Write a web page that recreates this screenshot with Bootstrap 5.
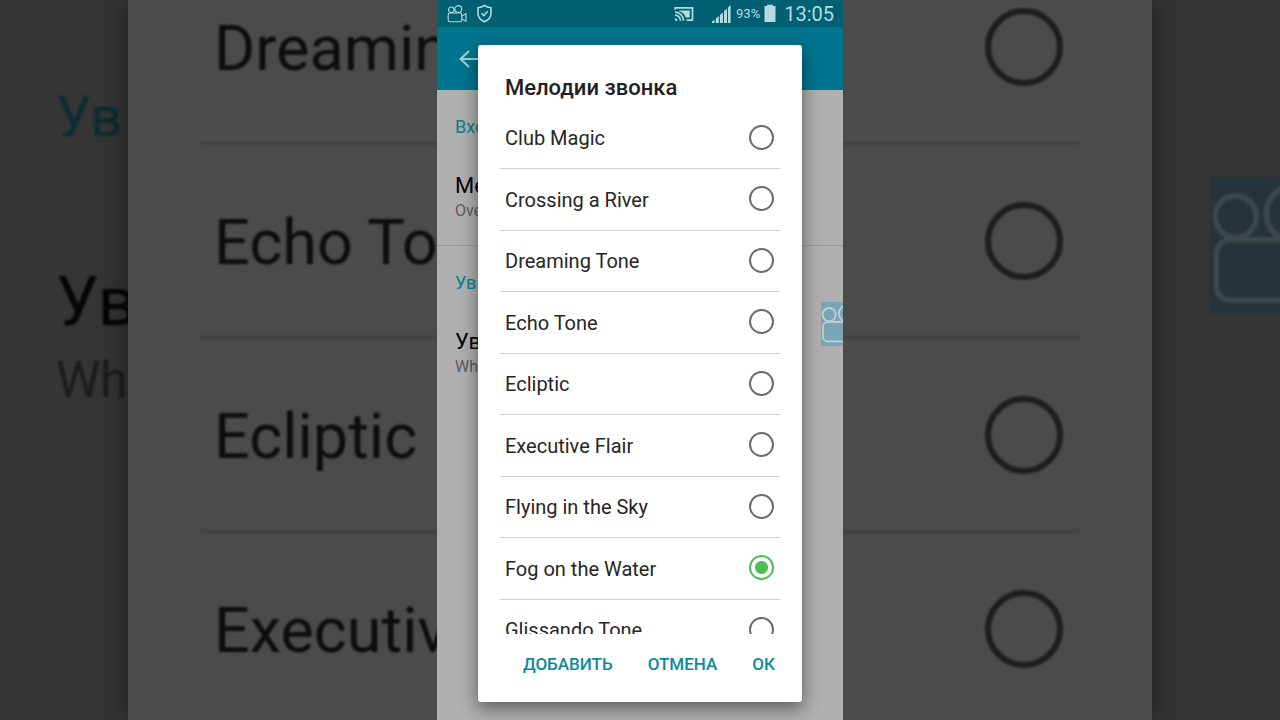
<!DOCTYPE html>
<html lang="ru">
<head>
<meta charset="utf-8">
<meta name="viewport" content="width=device-width, initial-scale=1">
<title>Мелодии звонка</title>
<link rel="stylesheet" href="https://cdn.jsdelivr.net/npm/bootstrap@5.3.0/dist/css/bootstrap.min.css">
<style>
  body { font-family: Roboto, "Noto Sans", sans-serif; background: #353535; }

  /* Backdrop and phone share one grid cell, the phone on top */
  .stage { grid-template: minmax(100vh, auto) / minmax(0, 1fr); height: 100vh; }
  .stage > * { grid-area: 1 / 1; }

  /* Dark enlarged backdrop */
  .backdrop-side { width: 10%; background: #353535; }
  .backdrop-side .big-section { font-size: 56px; line-height: 64px; color: #0d2c33; margin-top: 85px; }
  .backdrop-side .big-title { font-size: 68px; line-height: 72px; color: #060606; margin-top: 117px; }
  .backdrop-side .big-note { font-size: 50px; line-height: 56px; color: #1c1c1c; margin-top: 14px; }
  .backdrop-side.start { padding-left: 56px; }
  .backdrop-side.end { padding: 177px 0 0 58px; }
  .backdrop-panel { background: #4b4b4b; padding: 0 72px; box-shadow: 0 0 32px rgba(0, 0, 0, .45); position: relative; }
  .backdrop-list { grid-auto-rows: 194px; margin-top: -49px; }
  .backdrop-row { border-bottom: 3px solid #404040; padding: 0 17px 0 14px; font-size: 63px; line-height: 76px; color: #0d0d0d; }
  .backdrop-row span { padding-top: 4px; }
  .backdrop-row .form-check-input { width: 78px; height: 78px; border: 6px solid #1e1e1e; }
  .soft { filter: blur(1px); }

  /* Phone */
  .phone { width: 406px; max-width: 100%; background: #b0b0b0; }
  .status-bar { height: 27px; background: #005f70; color: #b4dbe2; padding: 0 9px 0 10px; }
  .status-bar .percent { font-size: 13px; }
  .status-bar .clock { font-size: 20px; line-height: 24px; }
  .app-bar { height: 63px; background: #00758e; padding-left: 20px; }
  .setting { padding: 27px 18px 25px; border-bottom: 1px solid #989898; }
  .setting:last-child { border-bottom: 0; }
  .setting h2 { font-size: 18px; line-height: 20px; font-weight: 400; color: #077f8e; margin-bottom: 37px; }
  .setting-name { font-size: 22px; line-height: 24px; color: #060606; margin-bottom: 3px; }
  .setting-value { font-size: 16px; line-height: 19px; color: #5c5c5c; }
  .recorder-tile { top: 302px; left: 384px; }

  /* Ringtone dialog */
  .dialog-layer { padding: 45px 41px 18px; z-index: 2; }
  .tone-dialog { border-radius: 3px; box-shadow: 0 6px 18px rgba(0, 0, 0, .5); }
  .tone-dialog h1 { font-size: 22px; line-height: 26px; font-weight: 500; color: #212121; padding: 30px 27px 7px; }
  .tone-list { height: 526px; grid-auto-rows: 61px 62px; margin: 0 22px; }
  .tone-row { border-bottom: 1px solid #d2d2d2; padding: 0 6px 0 5px; font-size: 20px; line-height: 24px; color: #262626; }
  .form-check-input { background: transparent; margin: 0; opacity: 1; flex: none; }
  .tone-row .form-check-input { width: 25px; height: 25px; margin-bottom: 2px; border: 2px solid #6b6b6b; }
  .tone-row .form-check-input:checked { border-color: #4fbf55; background: radial-gradient(circle, #4fbf55 6px, transparent 7px); }
  .dialog-actions { padding: 18px 27px 26px; gap: 35px; }
  .dialog-actions .btn { font-size: 17px; line-height: 24px; font-weight: 500; color: #0b8a9c; }
</style>
</head>
<body>
<svg class="d-none" aria-hidden="true">
  <symbol id="recorder" viewBox="0 0 44 44">
    <rect width="44" height="44" fill="var(--tile)"/>
    <g fill="none" stroke="var(--line)" stroke-width="1.8">
      <circle cx="8.2" cy="12.6" r="6.6"/>
      <circle cx="27" cy="11.6" r="9"/>
      <rect x="2" y="20" width="31" height="19.3" rx="4.5"/>
      <path d="M33 27l9-5v15l-9-5"/>
    </g>
  </symbol>
</svg>

<div class="stage d-grid overflow-hidden">

  <div class="d-flex overflow-hidden" aria-hidden="true" inert>
    <div class="backdrop-side start overflow-hidden flex-shrink-0">
      <div class="soft">
        <div class="big-section">Ув</div>
        <div class="big-title">Ув</div>
        <div class="big-note">Wh</div>
      </div>
    </div>
    <div class="backdrop-panel flex-grow-1">
      <div class="backdrop-list d-grid soft">
        <label class="backdrop-row d-flex align-items-center justify-content-between"><span>Dreamin</span><input class="form-check-input" type="radio" name="echo"></label>
        <label class="backdrop-row d-flex align-items-center justify-content-between"><span>Echo To</span><input class="form-check-input" type="radio" name="echo"></label>
        <label class="backdrop-row d-flex align-items-center justify-content-between"><span>Ecliptic</span><input class="form-check-input" type="radio" name="echo"></label>
        <label class="backdrop-row d-flex align-items-center justify-content-between"><span>Executiv</span><input class="form-check-input" type="radio" name="echo"></label>
      </div>
    </div>
    <div class="backdrop-side end overflow-hidden flex-shrink-0">
      <svg class="soft d-block" width="138" height="138" style="--tile:#25343a;--line:#3d474c"><use href="#recorder"/></svg>
    </div>
  </div>

  <div class="phone d-grid stage mx-auto position-relative overflow-hidden">
    <div>
      <div class="status-bar d-flex align-items-center">
        <svg width="21" height="18" viewBox="0 0 21 18" fill="none" stroke="currentColor" stroke-width="1.1" aria-label="Запись">
          <circle cx="4.3" cy="4.8" r="2.8"/><circle cx="11.3" cy="4" r="3.4"/>
          <rect x="1.2" y="8" width="13.6" height="8.8" rx="1.8"/><path d="M15 11l4-2.4v7.8L15 14"/>
        </svg>
        <svg class="ms-2" width="17" height="19" viewBox="0 0 17 19" fill="none" stroke="currentColor" stroke-width="1.6" aria-label="Защита">
          <path d="M8.500 1.300c2 1.500 4 2.200 6.500 2.500v5.700c0 3.600-2.600 6.500-6.500 8.200C4.600 16 2 13.100 2 9.500V3.800c2.500-.3 4.500-1 6.500-2.500z"/><path d="M5.500 9.300l2.200 2.200 4-4.200"/>
        </svg>
        <svg class="ms-auto" width="20" height="16" viewBox="0 0 20 16" fill="none" stroke="currentColor" stroke-width="1.7" aria-label="Трансляция">
          <path d="M1.200 3.800V1.800h17.300v12.400h-6"/><path d="M1 6.200a8.500 8.500 0 0 1 8.500 8.500M1 9.200a5.500 5.500 0 0 1 5.500 5.500"/>
          <path d="M1 12.200a2.500 2.500 0 0 1 2.500 2.500H1z" fill="currentColor" stroke="none"/>
          <path d="M5 4.500h10.700v7h-4C10.800 8.300 8.500 6 5 5.200z" fill="currentColor" stroke="none"/>
        </svg>
        <svg class="ms-3" width="22" height="20" viewBox="0 0 22 20" fill="currentColor" aria-label="Сигнал">
          <path d="M2 17.500l2.500-1.800V19H2zM5.800 14.500l3-2.500v7h-3zM9.900 11l3-2.700V19h-3zM14 7.300l3-2.800V19h-3zM18 3.600L20.600 1v18H18z"/>
        </svg>
        <span class="percent ms-1">93%</span>
        <svg class="ms-1" width="12" height="19" viewBox="0 0 12 19" fill="currentColor" aria-label="Батарея"><path d="M3 .8h6v1.200h2.500V18H.5V2H3z"/></svg>
        <span class="clock ms-2">13:05</span>
      </div>
      <div class="app-bar d-flex align-items-center">
        <button type="button" class="btn p-0 border-0 d-flex" aria-label="Назад">
          <svg width="24" height="24" viewBox="0 0 24 24" fill="none" stroke="#a9cdd5" stroke-width="2"><path d="M12 4l-8.500 8 8.500 8M3.500 12H24"/></svg>
        </button>
      </div>
      <section class="setting">
        <h2>Вхо</h2>
        <div class="setting-name">Ме</div>
        <div class="setting-value">Ove</div>
      </section>
      <section class="setting">
        <h2>Ув</h2>
        <div class="setting-name">Ув</div>
        <div class="setting-value">Wh</div>
      </section>
    </div>

    <svg class="recorder-tile position-absolute" width="44" height="44" style="--tile:#7aa5b5;--line:#bed0d6" aria-hidden="true"><use href="#recorder"/></svg>

    <div class="dialog-layer">
      <form class="tone-dialog bg-white" role="dialog" aria-labelledby="dialog-title">
        <h1 id="dialog-title" class="m-0">Мелодии звонка</h1>
        <div class="tone-list d-grid overflow-hidden">
          <label class="tone-row d-flex align-items-center justify-content-between">Club Magic<input class="form-check-input" type="radio" name="tone"></label>
          <label class="tone-row d-flex align-items-center justify-content-between">Crossing a River<input class="form-check-input" type="radio" name="tone"></label>
          <label class="tone-row d-flex align-items-center justify-content-between">Dreaming Tone<input class="form-check-input" type="radio" name="tone"></label>
          <label class="tone-row d-flex align-items-center justify-content-between">Echo Tone<input class="form-check-input" type="radio" name="tone"></label>
          <label class="tone-row d-flex align-items-center justify-content-between">Ecliptic<input class="form-check-input" type="radio" name="tone"></label>
          <label class="tone-row d-flex align-items-center justify-content-between">Executive Flair<input class="form-check-input" type="radio" name="tone"></label>
          <label class="tone-row d-flex align-items-center justify-content-between">Flying in the Sky<input class="form-check-input" type="radio" name="tone"></label>
          <label class="tone-row d-flex align-items-center justify-content-between">Fog on the Water<input class="form-check-input" type="radio" name="tone" checked></label>
          <label class="tone-row d-flex align-items-center justify-content-between">Glissando Tone<input class="form-check-input" type="radio" name="tone"></label>
        </div>
        <div class="dialog-actions d-flex justify-content-end">
          <button type="button" class="btn p-0 border-0">ДОБАВИТЬ</button>
          <button type="button" class="btn p-0 border-0">ОТМЕНА</button>
          <button type="submit" class="btn p-0 border-0">ОК</button>
        </div>
      </form>
    </div>
  </div>
</div>
<script src="https://cdn.jsdelivr.net/npm/bootstrap@5.3.0/dist/js/bootstrap.bundle.min.js"></script>
</body>
</html>
